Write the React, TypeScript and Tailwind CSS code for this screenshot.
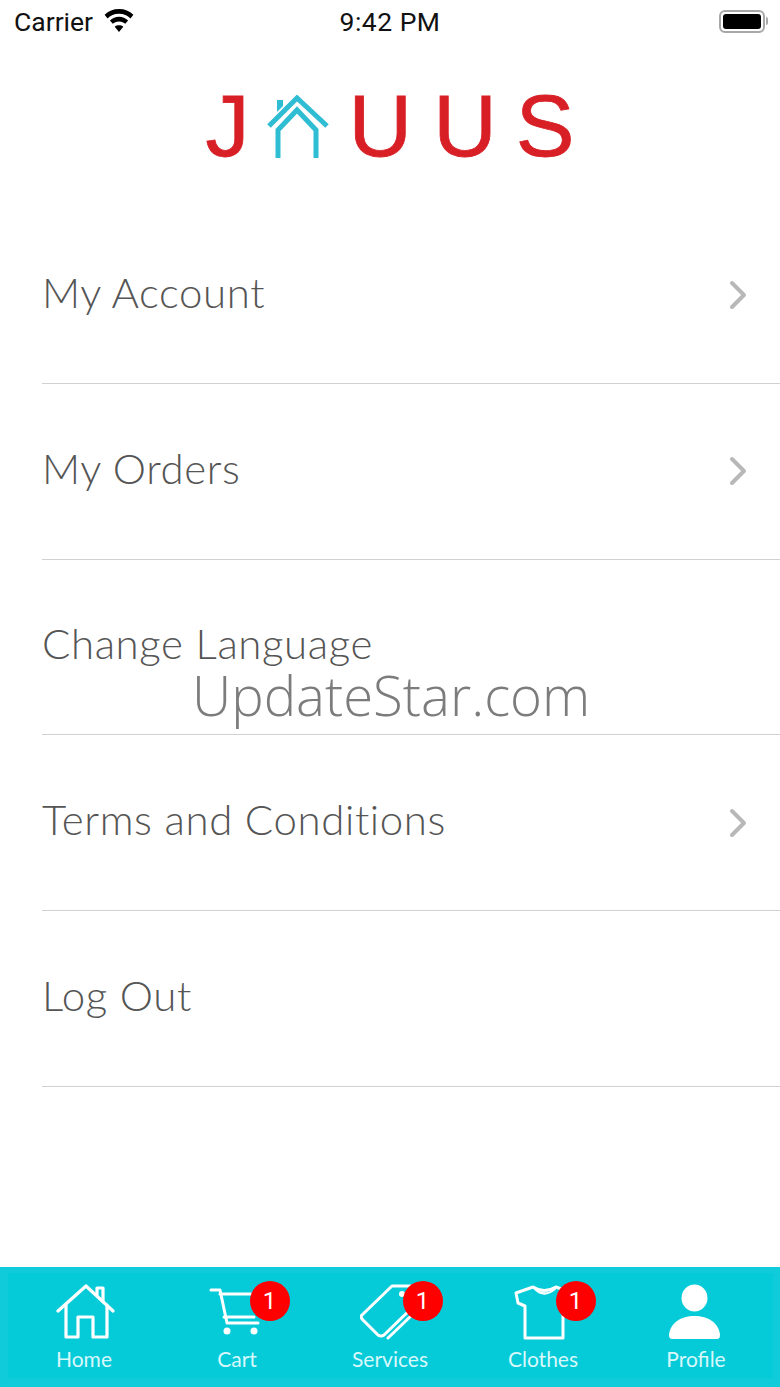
const rows = [
  { label: "My Account", arrow: true },
  { label: "My Orders", arrow: true },
  { label: "Change Language", arrow: false },
  { label: "Terms and Conditions", arrow: true },
  { label: "Log Out", arrow: false },
];

function HomeIcon() {
  return (
    <svg width="64" height="56" viewBox="0 0 64 56" fill="none" stroke="white" strokeWidth="3.2" strokeLinecap="round" strokeLinejoin="round">
      <path d="M6 27 L34 2 L61 27" />
      <path d="M45 11 V4 H51 V17" />
      <path d="M14 21 V53 H26 V33 H41 V53 H55 V21" />
    </svg>
  );
}

function CartIcon() {
  return (
    <svg width="56" height="50" viewBox="0 0 56 50" fill="none" stroke="white" strokeWidth="3" strokeLinecap="round" strokeLinejoin="round">
      <path d="M2 3 H11 L18 36 H49" />
      <path d="M11 7 H45" />
      <path d="M15 30 H45" />
      <circle cx="18" cy="44" r="3.5" fill="white" stroke="none" />
      <circle cx="45" cy="44" r="3.5" fill="white" stroke="none" />
    </svg>
  );
}

function TagIcon() {
  return (
    <svg width="60" height="56" viewBox="0 0 60 56" fill="none" stroke="white" strokeWidth="3" strokeLinecap="round" strokeLinejoin="round">
      <path d="M2 31 L32 2 H56 V20 L24 51 Q21 53 18 51 L3 36 Q0 33 2 31 Z" />
      <circle cx="42" cy="10" r="3" fill="white" stroke="none" />
      <path d="M28 54 L52 31" />
    </svg>
  );
}

function ShirtIcon() {
  return (
    <svg width="60" height="56" viewBox="0 0 60 56" fill="none" stroke="white" strokeWidth="3" strokeLinecap="round" strokeLinejoin="round">
      <path d="M20 3 L3 9 L5 19 L12 22 V54 H50 V22 L57 19 L59 9 L43 3 Q31 10 20 3 Z" />
      <path d="M22 5 Q31 14 42 5" strokeWidth="2.2" />
    </svg>
  );
}

function ProfileIcon() {
  return (
    <svg width="54" height="56" viewBox="0 0 54 56" fill="white">
      <ellipse cx="25.5" cy="14" rx="13" ry="13.5" />
      <path d="M0 51 C1 39 12 32 25.5 32 C39 32 50 39 51 51 Q51 55 48 55 H3 Q0 55 0 51 Z" />
    </svg>
  );
}

const tabs = [
  { label: "Home", icon: <HomeIcon />, badge: false },
  { label: "Cart", icon: <CartIcon />, badge: true },
  { label: "Services", icon: <TagIcon />, badge: true },
  { label: "Clothes", icon: <ShirtIcon />, badge: true },
  { label: "Profile", icon: <ProfileIcon />, badge: false },
];

export default function App() {
  return (
    <div className="relative flex h-[1387px] w-[780px] flex-col overflow-hidden bg-white font-['Lato',sans-serif]">
      {/* status bar */}
      <div className="flex h-[44px] items-center justify-between pl-[14px] pr-[12px] font-['Roboto',sans-serif] text-[26.5px] text-[#111111]">
        <div className="flex items-center gap-[11px]">
          <span>Carrier</span>
          <svg className="-mt-[3px]" width="30" height="23" viewBox="0 0 30 24" fill="black">
            <path d="M15 0 C21 0 26 2 30 6 L27 10 C24 7 20 5 15 5 C10 5 6 7 3 10 L0 6 C4 2 9 0 15 0 Z" />
            <path d="M15 8 C18.5 8 22 9.5 24.5 12 L21.5 15.5 C20 14 18 13 15 13 C12 13 10 14 8.5 15.5 L5.5 12 C8 9.5 11.5 8 15 8 Z" />
            <path d="M15 24 L10.5 18.5 C13 16.5 17 16.5 19.5 18.5 Z" />
          </svg>
        </div>
        <span className="absolute left-0 right-0 text-center tracking-[0.5px]">9:42 PM</span>
        <div className="-mt-[2px] flex items-center">
          <div className="h-[23px] w-[46px] rounded-[6px] border-2 border-[#a8a8a8] p-[2px]">
            <div className="h-full w-full rounded-[3px] bg-black" />
          </div>
          <div className="ml-[1px] h-[8px] w-[2px] rounded-r-sm bg-[#a8a8a8]" />
        </div>
      </div>

      {/* logo */}
      <div className="flex h-[164px] items-start justify-center pt-[32px] font-['Liberation_Sans',sans-serif] text-[88px] leading-[100px] text-[#d81f26] [-webkit-text-stroke:0.8px_#d81f26]">
        <span>J</span>
        <svg className="ml-[17px] mr-[20px] mt-[19px]" width="62" height="64" viewBox="0 0 62 64" fill="none" stroke="#2fbdd3" strokeWidth="5">
          <path d="M2 31 L30 3 L60 31" />
          <path d="M10 5 H16 V11 L10 17 Z" fill="#2fbdd3" stroke="none" />
          <path d="M11 63 V35 L30 15 L49 35 V63" />
        </svg>
        <span className="mr-[21px]">U</span>
        <span className="mr-[19px]">U</span>
        <span>S</span>
      </div>

      {/* rows */}
      <div className="flex flex-col">
        {rows.map((row) => (
          <div key={row.label} className="ml-[42px] flex h-[175.75px] items-center justify-between border-b border-[#d0d0d0] pr-[33px] text-[42px] font-light text-[#555555]">
            <span className="mb-[6px] tracking-[0.6px]">{row.label}</span>
            {row.arrow && (
              <svg width="18" height="30" viewBox="0 0 18 30" fill="none" stroke="#b8b8b8" strokeWidth="4" strokeLinecap="round" strokeLinejoin="round">
                <path d="M3 3 L15 15 L3 27" />
              </svg>
            )}
          </div>
        ))}
      </div>

      {/* watermark */}
      <div className="absolute left-[192px] top-[659px] font-['Open_Sans',sans-serif] text-[54.5px] leading-[72px] font-light text-[#7c7c7c]">
        UpdateStar.com
      </div>

      {/* tab bar */}
      <div className="mt-auto h-[120px] bg-[#10ccda] px-[7.5px] pb-[9px] pt-[6px]">
        <div className="grid h-full grid-cols-5 bg-[#05cbd9] pt-[10px]">
          {tabs.map((tab) => (
            <div key={tab.label} className="relative flex flex-col items-center">
              <div className="flex h-[58px] items-center justify-center">{tab.icon}</div>
              <span className="mt-[4px] text-[21px] leading-[28px] text-[#d8f8fb]">{tab.label}</span>
              {tab.badge && (
                <div className="absolute left-[89px] -top-[2px] flex h-[40px] w-[40px] items-center justify-center rounded-full bg-[#fe0000] font-['Roboto',sans-serif] text-[24px] text-white">
                  1
                </div>
              )}
            </div>
          ))}
        </div>
      </div>
    </div>
  );
}
